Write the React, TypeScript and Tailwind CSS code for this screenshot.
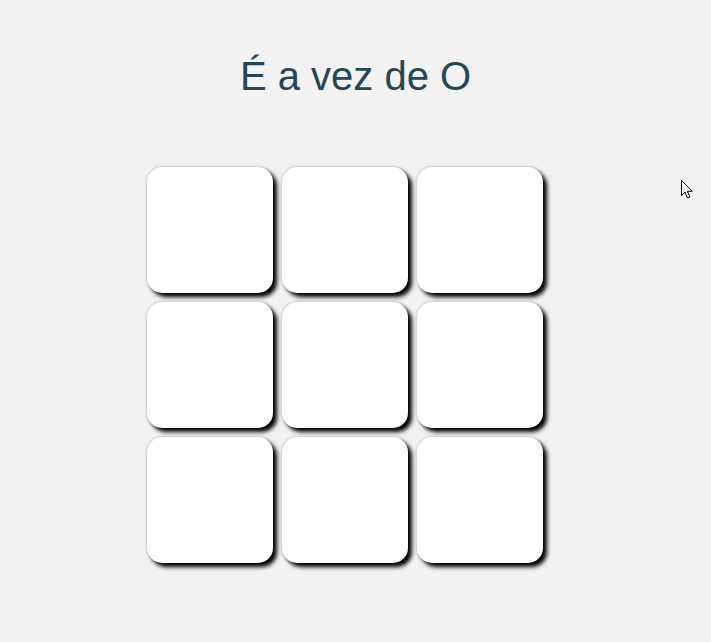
import { useState } from 'react';

type Cell = 'X' | 'O' | null;

const Cursor = () => (
  <svg
    className="absolute left-[680px] top-[179px]"
    width="14"
    height="21"
    viewBox="0 0 14 21"
  >
    <path
      d="M1.5 1.5 L1.5 16.5 L5 13 L7.5 19 L9.8 18 L7.4 12.3 L12.3 12.3 Z"
      fill="#fff"
      stroke="#000"
      strokeWidth="1"
      strokeLinejoin="miter"
    />
  </svg>
);

export default function App() {
  const [cells, setCells] = useState<Cell[]>(Array(9).fill(null));
  const [turn, setTurn] = useState<'X' | 'O'>('O');

  const play = (i: number) => {
    if (cells[i]) return;
    const next = [...cells];
    next[i] = turn;
    setCells(next);
    setTurn(turn === 'O' ? 'X' : 'O');
  };

  return (
    <div className="relative min-h-[642px] bg-[#f2f2f2] font-['Liberation_Sans',Arial,sans-serif]">
      {/* Header */}
      <h1 className="pt-[56px] text-center text-[40px] leading-[40px] text-[#264653]">
        É a vez de {turn}
      </h1>

      {/* Board */}
      <div className="mx-auto mt-[71px] w-[420px] pl-px">
        <div className="grid grid-cols-[repeat(3,126px)] gap-[9px]">
          {cells.map((c, i) => (
            <button
              key={i}
              onClick={() => play(i)}
              className="flex h-[126px] w-[126px] items-center justify-center rounded-[15px] bg-white text-[64px] text-[#264653] shadow-[4px_4px_4px_#000,0_0_3px_rgba(0,0,0,0.3)]"
            >
              {c}
            </button>
          ))}
        </div>
      </div>

      <Cursor />
    </div>
  );
}
